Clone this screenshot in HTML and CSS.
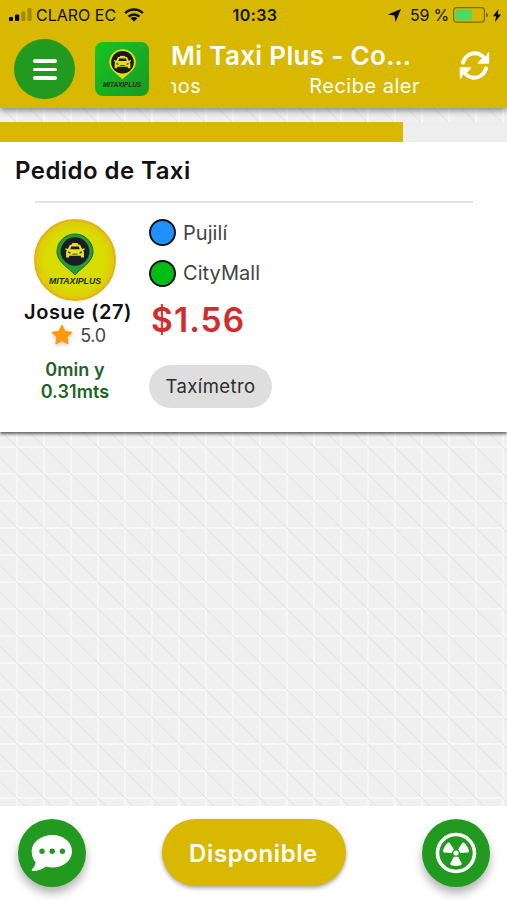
FILE: index.html
```html
<!DOCTYPE html>
<html lang="es">
<head>
<meta charset="utf-8">
<meta name="viewport" content="width=device-width, initial-scale=1">
<title>Mi Taxi Plus</title>
<link rel="stylesheet" href="styles.css">
</head>
<body>
<svg class="defs" width="0" height="0" aria-hidden="true">
  <symbol id="car" viewBox="0 0 24 18">
    <path fill="currentColor" fill-rule="evenodd" d="M9 0h6l1 2h2l2.400 5L23 6l.5 1.500-2 1.200 1 1.800V17h-3.500v-2H5v2H1.500v-6.500l1-1.800-2-1.200L1 6l2.600 1L6 2h2zM7.500 4 6.500 7.200h11L16.500 4zM4 10v1.500l3 .7-.8-1.700zm16 0-2.200.5-.8 1.700 3-.7zM9 12.500v1h6v-1z"/>
  </symbol>
</svg>
<div class="app">
  <header class="header">
    <div class="status">
      <div class="status-left">
        <svg class="signal" viewBox="0 0 23 14"><rect x="0" y="9" width="4" height="4" rx="1"/><rect x="6" y="6.500" width="4.200" height="6.500" rx="1"/><g opacity=".25"><rect x="12.300" y="3.500" width="4" height="9.500" rx="1"/><rect x="18.500" y="0" width="4" height="13" rx="1"/></g></svg>
        <span class="carrier">CLARO EC</span>
        <svg class="wifi" viewBox="0 0 20 14"><g fill="none" stroke="#111" stroke-width="2.500"><path d="M1.200 5.200a12.500 12.500 0 0 1 17.600 0"/><path d="M4.600 8.600a7.700 7.700 0 0 1 10.800 0"/></g><path d="M10 13.600 6.600 10.300a4.800 4.800 0 0 1 6.800 0z"/></svg>
      </div>
      <span class="clock">10:33</span>
      <div class="status-right">
        <svg class="arrow" viewBox="0 0 13 13"><path d="M13 0 7.500 13 6.500 6.500 0 5.500z"/></svg>
        <span class="percent">59 %</span>
        <svg class="battery" viewBox="0 0 36 16"><rect x=".6" y=".6" width="30.800" height="14.600" rx="3" fill="none" stroke="#7b6900" stroke-width="1.200"/><rect x="2.500" y="2.500" width="16.500" height="10.800" rx="1" fill="#4cd964"/><path d="M33 5.500q2 1 2 2.500t-2 2.500z" fill="#7b6900"/></svg>
        <svg class="bolt" viewBox="0 0 8 13"><path d="M5.500 0 0 7.300h3.200L2 13l6-7.600H4.600z"/></svg>
      </div>
    </div>
    <div class="toolbar">
      <button class="menu" aria-label="Menú"><i></i><i></i><i></i></button>
      <svg class="logo" viewBox="0 0 54 54">
        <defs><linearGradient id="lg" x1="0" y1="0" x2="1" y2="1"><stop offset="0" stop-color="#16c522"/><stop offset="1" stop-color="#189a25"/></linearGradient></defs>
        <rect width="54" height="54" rx="8" fill="url(#lg)"/>
        <path d="M27.500 37.500C24 33 14.200 28.500 14.200 20.500a13.300 13.300 0 0 1 26.600 0C40.800 28.500 31 33 27.500 37.500z" fill="#e4dc18"/>
        <circle cx="27.500" cy="20.300" r="11.300" fill="#171b14"/>
        <svg x="18.500" y="13.500" width="18" height="13.500" color="#e4dc18"><use href="#car"/></svg>
        <text x="8" y="44.800" class="brand" font-size="7.200" textLength="38" lengthAdjust="spacingAndGlyphs">MITAXIPLUS</text>
      </svg>
      <div class="heading">
        <h1>Mi Taxi Plus - Co…</h1>
        <div class="marquee"><span class="tail">nos</span><span class="lead">Recibe aler</span></div>
      </div>
      <svg class="refresh" viewBox="0 0 32 30"><g fill="none" stroke="#fff" stroke-width="4" stroke-linecap="round" stroke-linejoin="round"><path d="M4 12C6 5 12 2 17 2.300c4 .2 7.500 2.500 10 6.200"/><path d="M28 18C26 25 20 28 15 27.700c-4-.2-7.500-2.500-10-6.200"/></g><path fill="#fff" stroke="#fff" stroke-width="1.500" stroke-linejoin="round" d="M30.500 2v10.500H20.200l3-3.500 4-1zM1.500 28V17.500h10.300l-3 3.500-4 1z"/></svg>
    </div>
  </header>

  <main class="content">
    <div class="progress"><div class="progress-fill"></div></div>
    <section class="card">
      <h2>Pedido de Taxi</h2>
      <hr>
      <div class="order">
        <div class="client">
          <svg class="avatar" viewBox="0 0 82 82">
            <defs><radialGradient id="ag"><stop offset=".75" stop-color="#d9dc00"/><stop offset="1" stop-color="#dfc60c"/></radialGradient></defs>
            <circle cx="41" cy="41" r="40" fill="url(#ag)" stroke="#e6b116" stroke-width="2"/>
            <path d="M41 56C37 50.500 23 43.500 23 33a18 18 0 0 1 36 0C59 43.500 45 50.500 41 56z" fill="#259b3b" stroke="#176f2a"/>
            <circle cx="41" cy="32.500" r="14.300" fill="#191e20"/>
            <svg x="30.800" y="24" width="20.400" height="15.500" color="#e6e02a"><use href="#car"/></svg>
            <text x="15" y="65.300" class="brand" font-size="9.500" textLength="52" lengthAdjust="spacingAndGlyphs">MITAXIPLUS</text>
          </svg>
          <strong class="name">Josue (27)</strong>
          <div class="rating">
            <svg class="star" viewBox="0 0 24 24"><path d="m12 2.500 2.900 6 6.600.9-4.800 4.600 1.200 6.600-5.900-3.200-5.900 3.200L7.300 14 2.500 9.400l6.600-.9z" fill="#ff9a0c" stroke="#ff9a0c" stroke-width="1.500" stroke-linejoin="round"/></svg>
            <span>5.0</span>
          </div>
          <p class="distance">0min y<br>0.31mts</p>
        </div>
        <div class="trip">
          <div class="place"><i class="dot blue"></i><span>Pujilí</span></div>
          <div class="place"><i class="dot green"></i><span>CityMall</span></div>
          <strong class="price">$1.56</strong>
          <span class="chip">Taxímetro</span>
        </div>
      </div>
    </section>
  </main>

  <footer class="footer">
    <button class="round" aria-label="Mensajes">
      <svg width="68" height="68" viewBox="0 0 68 68"><path fill="#fff" d="M34.500 16C45.500 16 54 23 54 32.300S45.500 48.500 34.500 48.500q-3.500 0-6.500-1C24 50.500 19.500 52 14.500 52q-1.500-.5-.5-1.500 3-3 3.700-7C15 40.500 13.700 36.500 13.700 32.300 13.700 23 23 16 34.500 16z"/><g fill="#22991f"><circle cx="24" cy="32.300" r="2.700"/><circle cx="34.200" cy="32.300" r="2.700"/><circle cx="44.400" cy="32.300" r="2.700"/></g></svg>
    </button>
    <button class="available">Disponible</button>
    <button class="round" aria-label="Radio">
      <svg width="68" height="68" viewBox="0 0 68 68"><circle cx="34" cy="34" r="18.500" fill="none" stroke="#fff" stroke-width="3.600"/><circle cx="34" cy="34" r="2.600" fill="#fff"/><g fill="#fff"><path id="blade" d="m31.800 37.800h4.400q1.800 3.300 3.500 7 .1 2-5.700 2.200-5.800-.2-5.700-2.200 1.700-3.700 3.500-7z"/><use href="#blade" transform="rotate(120 34 34)"/><use href="#blade" transform="rotate(240 34 34)"/></g></svg>
    </button>
  </footer>
</div>
</body>
</html>
```

FILE: styles.css
```css
* { box-sizing: border-box; }
body { margin: 0; font-family: Inter, "Liberation Sans", sans-serif; color: #111; }
h1, h2, p { margin: 0; }
button { border: 0; padding: 0; font: inherit; }
svg { display: block; flex: none; }
.defs { position: absolute; }

.app {
  height: 900px;
  display: flex;
  flex-direction: column;
  overflow: hidden;
}

.header {
  height: 108px;
  flex: none;
  background: #d8b800;
  box-shadow: 0 2px 7px rgba(0, 0, 0, .5);
  z-index: 1;
}
.status {
  height: 30px;
  display: grid;
  grid-template-columns: 1fr auto 1fr;
  align-items: center;
  padding: 0 6px 0 9px;
  font-size: 16px;
}
.status-left, .status-right { display: flex; align-items: center; }
.status-right { justify-content: flex-end; }
.signal { width: 23px; height: 14px; margin-right: 4px; }
.carrier { letter-spacing: 0; }
.wifi { width: 20px; height: 14px; margin-left: 8px; }
.clock { font-weight: 600; letter-spacing: .4px; }
.arrow { width: 13px; height: 13px; margin-right: 9px; }
.percent { margin-right: 4px; letter-spacing: -.2px; }
.battery { width: 36px; height: 16px; margin-right: 4px; }
.bolt { width: 8px; height: 13px; }

.toolbar {
  height: 78px;
  display: flex;
  align-items: flex-start;
  padding: 9px 16px 0 14px;
  color: #fff;
}
.menu {
  width: 61px;
  height: 60px;
  border-radius: 50%;
  background: #22991f;
  display: flex;
  flex-direction: column;
  align-items: center;
  justify-content: center;
  gap: 5px;
  margin-right: 20px;
  padding-top: 1px;
}
.menu i { width: 24px; height: 3.500px; border-radius: 2px; background: #fff; }
.logo { width: 54px; height: 54px; margin: 3px 22px 0 0; }
.brand { font-family: "Liberation Sans", sans-serif; font-weight: 700; font-style: italic; fill: #1b2a10; }
.heading { width: 249px; flex: none; }
h1 { font-size: 26px; line-height: 34px; font-weight: 600; letter-spacing: .33px; white-space: nowrap; }
.marquee {
  height: 26px;
  display: flex;
  justify-content: space-between;
  overflow: hidden;
  font-size: 20px;
  line-height: 26px;
  letter-spacing: .5px;
}
.tail { margin-left: -5.500px; }
.lead { white-space: nowrap; }
.refresh { width: 31px; height: 29px; margin: 12px 1px 0 auto; }

.content {
  flex: 1;
  min-height: 0;
  padding-top: 14px;
  background-color: #f0f0f0;
  background-image:
    linear-gradient(45deg, transparent 47%, #e6e6e6 49.500%, #e6e6e6 50.500%, transparent 53%),
    linear-gradient(to right, #f7f7f7 2px, transparent 2px),
    linear-gradient(to bottom, #f7f7f7 2px, transparent 2px);
  background-size: 27px 27px;
  background-position: 16px 14px;
}
.progress { height: 20px; background: #eee; position: relative; }
.progress-fill { width: 403px; height: 20px; background: #d8b800; }
.card {
  height: 290px;
  padding: 14px 15px 0;
  background: #fff;
  box-shadow: 0 2px 3px rgba(0, 0, 0, .6);
}
h2 { font-size: 24px; line-height: 30px; font-weight: 600; letter-spacing: .45px; }
hr { height: 2px; margin: 15px 19px 16px 20px; border: 0; background: #e4e4e4; }
.order { display: flex; }
.client { width: 120px; display: flex; flex-direction: column; align-items: center; }
.avatar { width: 82px; height: 82px; }
.name { font-size: 20px; line-height: 22px; font-weight: 600; letter-spacing: .5px; white-space: nowrap; margin-left: 6px; }
.rating { height: 24px; margin-left: 6px; display: flex; align-items: center; gap: 6px; font-size: 18px; letter-spacing: -.3px; color: #444; }
.star { width: 24px; height: 24px; filter: drop-shadow(0 2px 2px rgba(0, 0, 0, .2)); }
.distance { margin-top: 12px; font-size: 18px; line-height: 22px; font-weight: 600; letter-spacing: .1px; text-align: center; color: #206425; }
.trip { display: flex; flex-direction: column; align-items: flex-start; padding-left: 14px; }
.place { height: 27px; margin-bottom: 13.500px; display: flex; align-items: center; gap: 7px; font-size: 20px; letter-spacing: .05px; color: #444; }
.dot { width: 27px; height: 27px; border: 2px solid #111; border-radius: 50%; }
.blue { background: #1e90ff; }
.green { background: #00bd14; }
.price { margin-left: 2px; font-size: 33.500px; line-height: 40px; font-weight: 600; letter-spacing: 1.100px; color: #d32c2c; }
.chip {
  height: 43px;
  width: 123px;
  margin-top: 25px;
  border-radius: 22px;
  background: #dedede;
  font-size: 18.500px;
  letter-spacing: .4px;
  line-height: 42px;
  text-align: center;
  color: #2c2c2c;
}

.footer {
  height: 94px;
  flex: none;
  display: flex;
  align-items: flex-start;
  justify-content: space-between;
  padding: 13px 17px 0 18px;
  background: #fff;
}
.round {
  width: 68px;
  height: 68px;
  border-radius: 50%;
  background: #22991f;
  box-shadow: 0 6px 10px rgba(0, 0, 0, .3);
}
.available {
  width: 184px;
  height: 67px;
  margin-right: 1px;
  border-radius: 34px;
  background: #d8b800;
  box-shadow: 0 2px 4px rgba(0, 0, 0, .35);
  color: #fff;
  font-size: 24px;
  font-weight: 600;
  letter-spacing: .6px;
  line-height: 69px;
}
```
